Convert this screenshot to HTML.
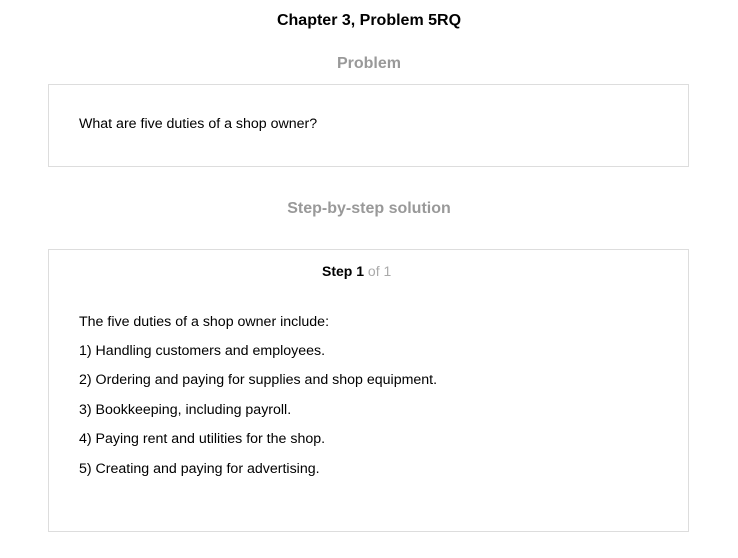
<!DOCTYPE html>
<html><head><meta charset="utf-8"><style>
body{margin:0;width:738px;height:558px;background:#fff;font-family:"Liberation Sans",Arial,sans-serif;position:relative;overflow:hidden;color:#000}
.a{position:absolute;white-space:nowrap}
.c{left:0;width:738px;text-align:center;font-weight:bold}
.box{position:absolute;left:48px;width:639px;border:1px solid #ddd}
.t{font-size:14.2px;left:79px}
</style></head><body>
<div class="a c" style="top:12px;font-size:16px">Chapter 3, Problem 5RQ</div>
<div class="a c" style="top:55px;font-size:16px;color:#999">Problem</div>
<div class="box" style="top:84px;height:81px"></div>
<div class="a t" style="top:116px">What are five duties of a shop owner?</div>
<div class="a" style="top:263px;left:322px;font-size:14px;font-weight:bold">Step 1 <span style="font-weight:normal;color:#aaa">of 1</span></div>
<div class="a c" style="top:200px;font-size:16px;color:#999">Step-by-step solution</div>
<div class="box" style="top:249px;height:281px"></div>
<div class="a t" style="top:314px">The five duties of a shop owner include:</div>
<div class="a t" style="top:343px">1) Handling customers and employees.</div>
<div class="a t" style="top:372px">2) Ordering and paying for supplies and shop equipment.</div>
<div class="a t" style="top:402px">3) Bookkeeping, including payroll.</div>
<div class="a t" style="top:431px">4) Paying rent and utilities for the shop.</div>
<div class="a t" style="top:461px">5) Creating and paying for advertising.</div>
</body></html>
